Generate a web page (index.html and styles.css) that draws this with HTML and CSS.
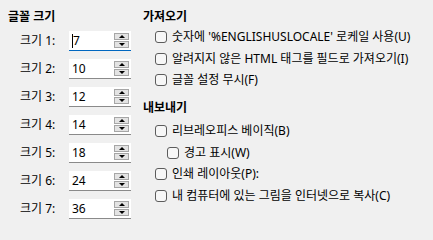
FILE: index.html
```html
<!DOCTYPE html>
<html lang="ko">
<head>
<meta charset="utf-8">
<link rel="stylesheet" href="styles.css">
</head>
<body>
<div class="page">
  <section class="col-left">
    <h2 class="heading">글꼴 크기</h2>
    <div class="rows">
      <div class="row"><span class="label">크기 1:</span><div class="spin focus"><span class="caret"></span><span class="val">7</span><div class="btns"><span class="btn up"></span><span class="btn down"></span></div></div></div>
      <div class="row"><span class="label">크기 2:</span><div class="spin"><span class="val">10</span><div class="btns"><span class="btn up"></span><span class="btn down"></span></div></div></div>
      <div class="row"><span class="label">크기 3:</span><div class="spin"><span class="val">12</span><div class="btns"><span class="btn up"></span><span class="btn down"></span></div></div></div>
      <div class="row"><span class="label">크기 4:</span><div class="spin"><span class="val">14</span><div class="btns"><span class="btn up"></span><span class="btn down"></span></div></div></div>
      <div class="row"><span class="label">크기 5:</span><div class="spin"><span class="val">18</span><div class="btns"><span class="btn up"></span><span class="btn down"></span></div></div></div>
      <div class="row"><span class="label">크기 6:</span><div class="spin"><span class="val">24</span><div class="btns"><span class="btn up"></span><span class="btn down"></span></div></div></div>
      <div class="row"><span class="label">크기 7:</span><div class="spin"><span class="val">36</span><div class="btns"><span class="btn up"></span><span class="btn down"></span></div></div></div>
    </div>
  </section>
  <section class="col-right">
    <h2 class="heading">가져오기</h2>
    <div class="checks">
      <label class="check"><span class="box"></span><span>숫자에 '%ENGLISHUSLOCALE' 로케일 사용(U)</span></label>
      <label class="check"><span class="box"></span><span>알려지지 않은 HTML 태그를 필드로 가져오기(I)</span></label>
      <label class="check"><span class="box"></span><span>글꼴 설정 무시(F)</span></label>
    </div>
    <h2 class="heading heading-2">내보내기</h2>
    <div class="checks checks-2">
      <label class="check"><span class="box"></span><span>리브레오피스 베이직(B)</span></label>
      <label class="check sub"><span class="box"></span><span>경고 표시(W)</span></label>
      <label class="check"><span class="box"></span><span>인쇄 레이아웃(P):</span></label>
      <label class="check"><span class="box"></span><span>내 컴퓨터에 있는 그림을 인터넷으로 복사(C)</span></label>
    </div>
  </section>
</div>
</body>
</html>
```

FILE: styles.css
```css
html, body {
  margin: 0;
  padding: 0;
  background: #f0f0f0;
}
body {
  font-family: "Noto Sans", "Noto Sans CJK KR", sans-serif;
  font-size: 12px;
  color: #000;
  width: 433px;
  height: 228px;
  overflow: hidden;
}
.page {
  display: flex;
  padding-top: 9px;
}
.heading {
  margin: 0;
  font-size: 12px;
  font-weight: bold;
  line-height: 16px;
}
.col-left {
  width: 135px;
  padding-left: 8px;
}
.rows {
  display: flex;
  flex-direction: column;
  gap: 8px;
  margin-top: 6px;
  padding-left: 12px;
}
.row {
  display: flex;
  align-items: center;
  height: 20px;
}
.label {
  width: 49px;
  line-height: 16px;
}
.spin {
  position: relative;
  width: 62px;
  height: 20px;
  background: #fff;
  box-sizing: border-box;
  border-bottom: 1px solid #8a8a8a;
  display: flex;
  align-items: center;
  padding-left: 3px;
}
.spin.focus {
  border-bottom: 1px solid #0067c0;
}
.caret {
  width: 1px;
  height: 14px;
  background: #000;
}
.val {
  line-height: 16px;
}
.btns {
  position: absolute;
  right: 2px;
  top: 2px;
  width: 15px;
  display: flex;
  flex-direction: column;
  gap: 1px;
}
.btn {
  position: relative;
  height: 7px;
  box-sizing: border-box;
  background: #e3e3e3;
  border: 1px solid #a6a6a6;
}
.btn::after {
  content: "";
  position: absolute;
  left: 4px;
  width: 0;
  height: 0;
  border-left: 3px solid transparent;
  border-right: 3px solid transparent;
}
.btn.up::after {
  top: 1px;
  border-bottom: 3px solid #000;
}
.btn.down::after {
  top: 1px;
  border-top: 3px solid #000;
}
.col-right {
  flex: 1;
}
.checks {
  display: flex;
  flex-direction: column;
  gap: 4.5px;
  margin-top: 3.5px;
  padding-left: 12px;
}
.heading-2 {
  margin-top: 11.5px;
}
.checks-2 {
  margin-top: 6.5px;
}
.check {
  display: flex;
  align-items: center;
  gap: 5px;
  height: 17px;
  line-height: 16px;
  white-space: nowrap;
}
.check.sub {
  padding-left: 12px;
}
.box {
  width: 12px;
  height: 12px;
  box-sizing: border-box;
  border: 1px solid #5c5c5c;
  border-radius: 3px;
  background: #f7f7f7;
  flex: none;
}
```
